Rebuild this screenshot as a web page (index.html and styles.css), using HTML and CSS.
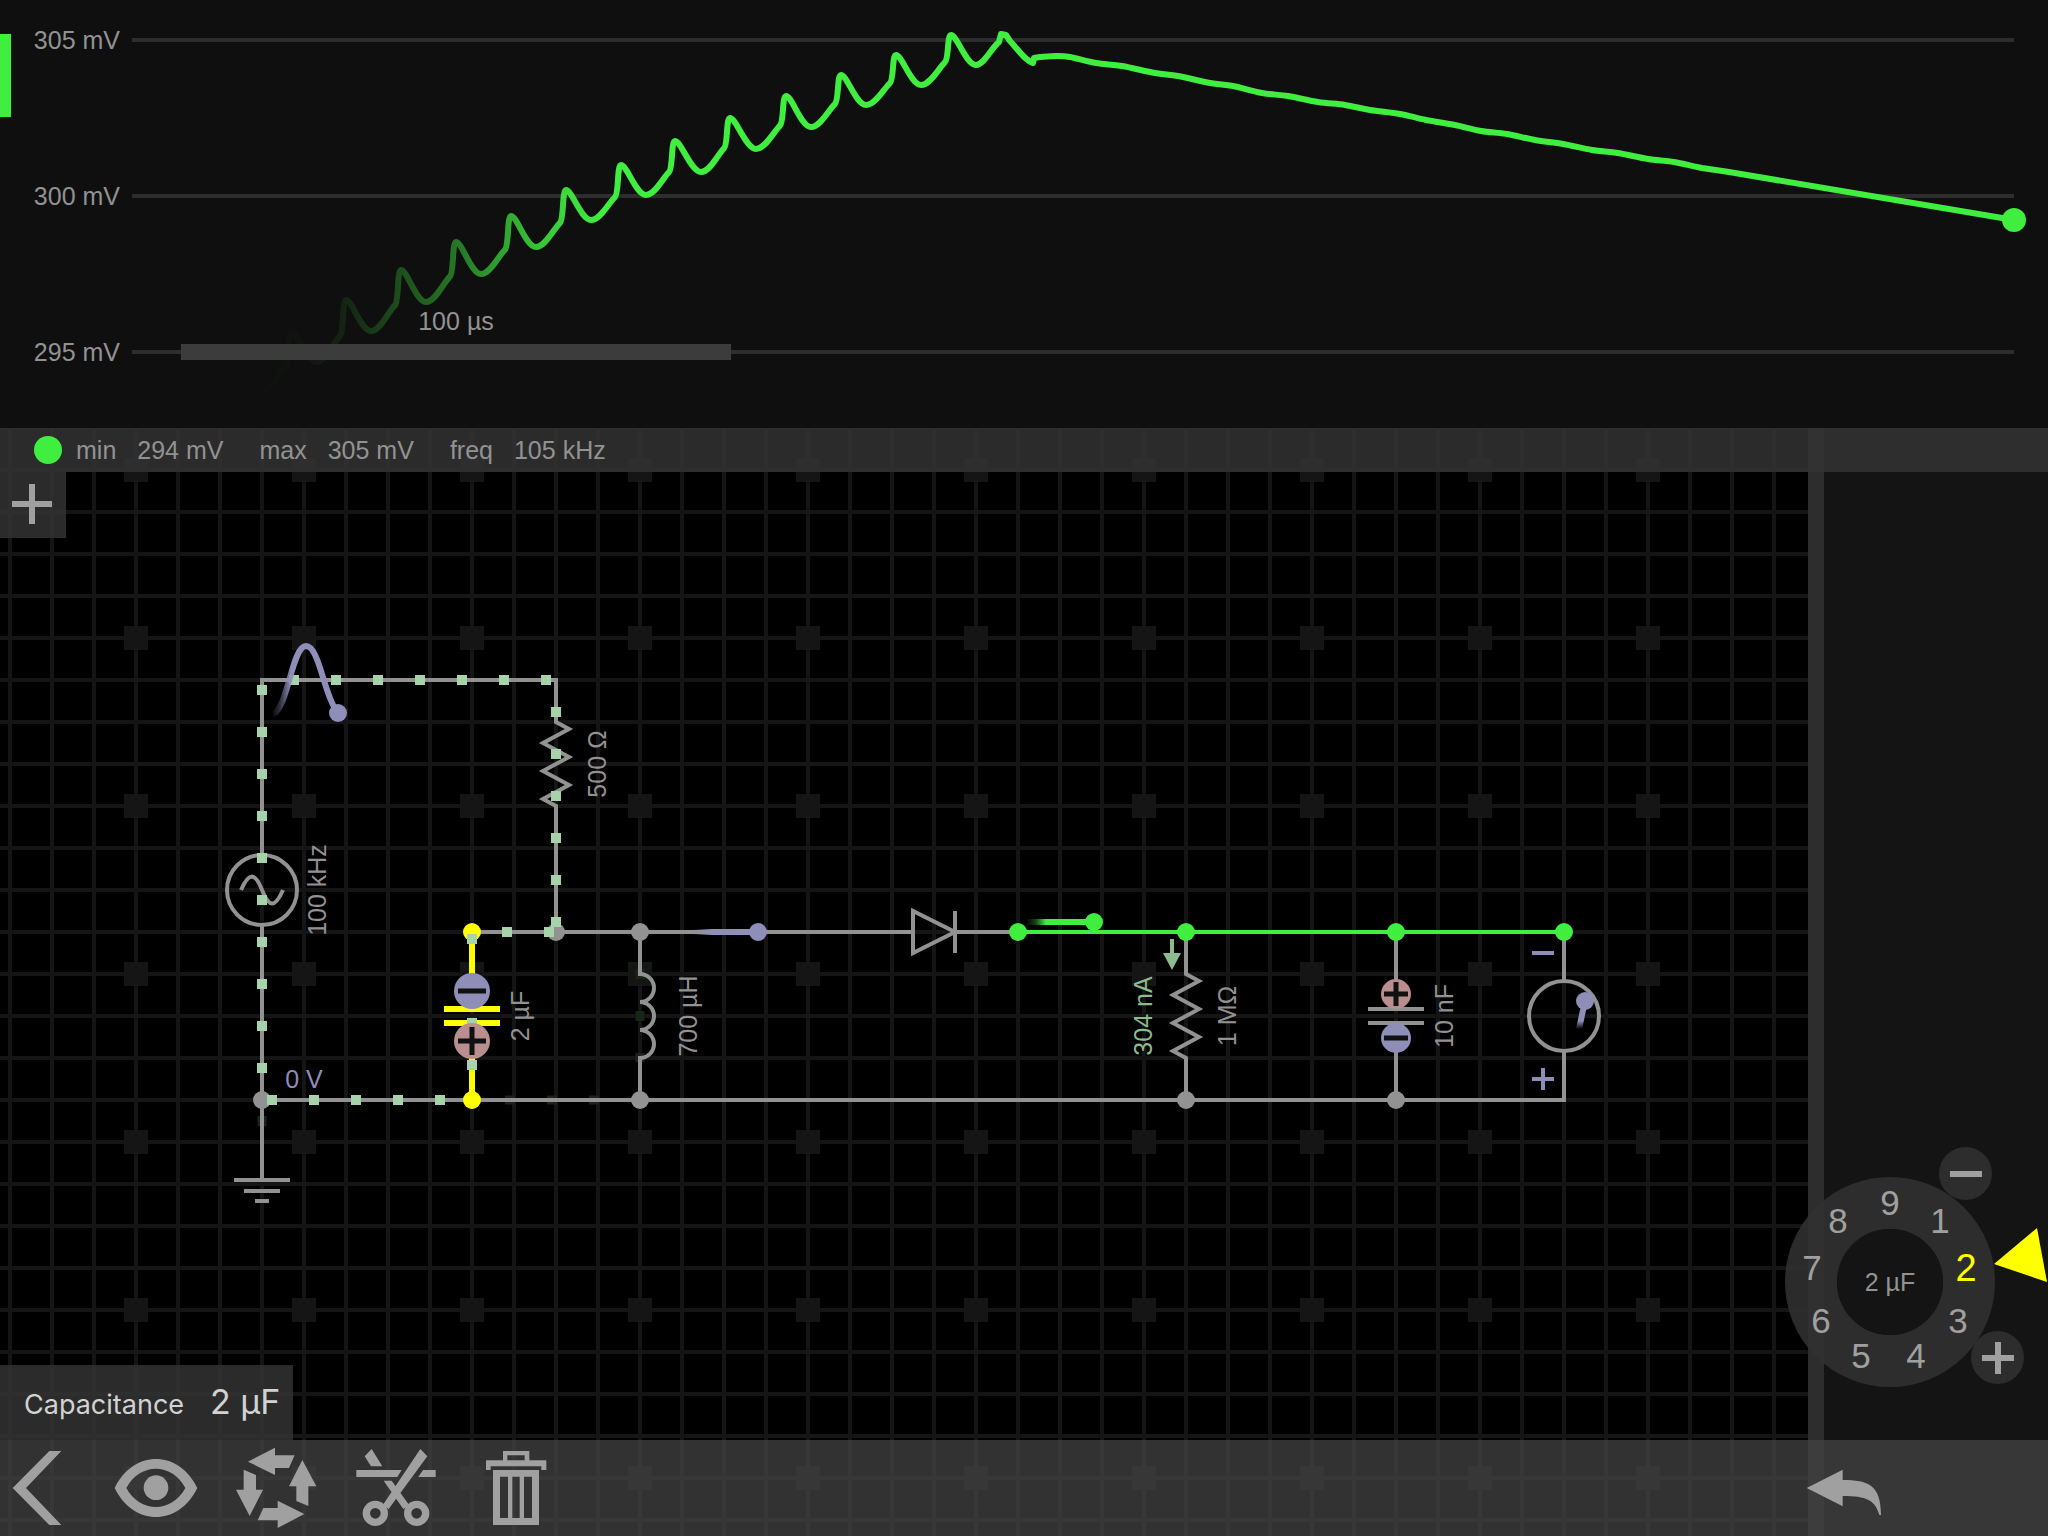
FILE: index.html
```html
<!DOCTYPE html>
<html lang="en">
<head>
<meta charset="utf-8">
<meta name="viewport" content="width=device-width, initial-scale=1">
<title>Circuit simulator</title>
<link rel="stylesheet" href="styles.css">
</head>
<body>
<header class="scope">
  <svg class="scope-plot" viewBox="0 0 2048 428" role="img" aria-label="Voltage over time">
    <defs>
      <linearGradient id="trace-fade" gradientUnits="userSpaceOnUse" x1="255" y1="0" x2="605" y2="0">
        <stop offset="0" stop-color="#40ee40" stop-opacity="0"/>
        <stop offset=".14" stop-color="#40ee40" stop-opacity=".02"/>
        <stop offset=".26" stop-color="#40ee40" stop-opacity=".1"/>
        <stop offset=".42" stop-color="#40ee40" stop-opacity=".29"/>
        <stop offset=".57" stop-color="#40ee40" stop-opacity=".46"/>
        <stop offset=".73" stop-color="#40ee40" stop-opacity=".7"/>
        <stop offset=".9" stop-color="#40ee40" stop-opacity=".92"/>
        <stop offset="1" stop-color="#40ee40"/>
      </linearGradient>
    </defs>
    <path class="scope-line" d="M132 40H2014M132 196H2014M132 352H2014"/>
    <rect class="live" x="0" y="34" width="11" height="83"/>
    <path id="trace" class="trace" stroke="url(#trace-fade)"/>
    <circle class="live" cx="2014" cy="220" r="12"/>
    <rect class="time-bar" x="181" y="344" width="550" height="16"/>
    <g class="label">
      <text x="120" y="49" text-anchor="end">305 mV</text>
      <text x="120" y="205" text-anchor="end">300 mV</text>
      <text x="120" y="361" text-anchor="end">295 mV</text>
      <text x="456" y="330" text-anchor="middle">100 µs</text>
    </g>
  </svg>
</header>

<main class="workspace">
  <svg class="board" role="img" aria-label="Circuit diagram">
    <defs>
      <pattern id="cells" patternUnits="userSpaceOnUse" x="8" y="6" width="42" height="42">
        <path class="grid-fill" d="M0 0H42V4H4V42H0Z"/>
      </pattern>
      <pattern id="marks" patternUnits="userSpaceOnUse" x="124" y="458" width="168" height="168">
        <rect class="grid-fill" width="24" height="24"/>
      </pattern>
      <linearGradient id="sine-fade" gradientUnits="userSpaceOnUse" x1="270" y1="0" x2="291" y2="0">
        <stop offset="0" stop-color="#8e8eb9" stop-opacity="0"/>
        <stop offset=".5" stop-color="#8e8eb9" stop-opacity=".35"/>
        <stop offset="1" stop-color="#8e8eb9"/>
      </linearGradient>
      <linearGradient id="probe-fade" gradientUnits="userSpaceOnUse" x1="694" y1="0" x2="712" y2="0">
        <stop offset="0" stop-color="#8e8eb9" stop-opacity="0"/>
        <stop offset="1" stop-color="#8e8eb9"/>
      </linearGradient>
      <linearGradient id="live-fade" gradientUnits="userSpaceOnUse" x1="1026" y1="0" x2="1046" y2="0">
        <stop offset="0" stop-color="#40ee40" stop-opacity="0"/>
        <stop offset=".5" stop-color="#40ee40" stop-opacity=".3"/>
        <stop offset="1" stop-color="#40ee40"/>
      </linearGradient>
      <linearGradient id="needle-fade" gradientUnits="userSpaceOnUse" x1="0" y1="1029" x2="0" y2="1021">
        <stop offset="0" stop-color="#8e8eb9" stop-opacity="0"/>
        <stop offset="1" stop-color="#8e8eb9"/>
      </linearGradient>
    </defs>
    <g transform="translate(0 -428)">
      <rect x="0" y="426" width="4000" height="3000" fill="url(#cells)"/>
      <rect x="0" y="426" width="1700" height="3000" fill="url(#marks)"/>

      <!-- nearly still charges -->
      <path class="charge-dim" d="M505 1100H615M640 969V1062" />
      <path class="charge-dim" d="M262 1116V1126"/>

      <!-- wires -->
      <g class="wire">
        <path d="M262 855V680H556V722L569 729L543 743L569 757L543 771L569 785L543 799L556 806V932"/>
        <path d="M262 925V1180M234 1180H290M244 1191H280M255 1201H269"/>
        <circle cx="262" cy="890" r="35"/>
        <path d="M241 890C249 872 255 872 262 890S275 908 283 890"/>
        <path d="M472 932H913M955 932H1018M913 911V953L955 932ZM955 911V953"/>
        <path d="M640 932V974A14 14 0 0 1 640 1002A14 14 0 0 1 640 1030A14 14 0 0 1 640 1058V1100"/>
        <path d="M1186 932V974L1199 981L1173 995L1199 1009L1173 1023L1199 1037L1173 1051L1186 1058V1100"/>
        <path d="M1396 932V1009M1368 1009H1424M1368 1023H1424M1396 1023V1100"/>
        <path d="M1564 932V981M1564 1051V1100H262"/>
        <circle cx="1564" cy="1016" r="35"/>
      </g>
      <g class="node">
        <circle cx="262" cy="1100" r="9"/>
        <circle cx="556" cy="932" r="9"/>
        <circle cx="640" cy="932" r="9"/>
        <circle cx="640" cy="1100" r="9"/>
        <circle cx="1186" cy="1100" r="9"/>
        <circle cx="1396" cy="1100" r="9"/>
      </g>

      <!-- output net -->
      <path class="live-wire" d="M1018 932H1564"/>
      <rect x="1026" y="919" width="66" height="6" fill="url(#live-fade)"/>
      <g class="live">
        <circle cx="1094" cy="922" r="9"/>
        <circle cx="1018" cy="932" r="9"/>
        <circle cx="1186" cy="932" r="9"/>
        <circle cx="1396" cy="932" r="9"/>
        <circle cx="1564" cy="932" r="9"/>
      </g>

      <!-- selected capacitor -->
      <path class="selected" d="M472 932V1009M444 1009H500M444 1023H500M472 1023V1100"/>
      <g class="selected-node">
        <circle cx="472" cy="932" r="9"/>
        <circle cx="472" cy="1100" r="9"/>
      </g>

      <!-- moving charges -->
      <g class="charge">
        <path d="M262 685V1080"/>
        <path d="M289 680H551"/>
        <path d="M556 707V930"/>
        <path d="M502 932H554"/>
        <path d="M267 1100H450"/>
        <path d="M472 934V945M472 1018V1028M472 1060V1070"/>
      </g>

      <!-- plate charge badges -->
      <circle class="negative" cx="472" cy="991" r="18"/>
      <circle class="positive" cx="472" cy="1041" r="18"/>
      <path class="sign" d="M458 991H486M458 1041H486M472 1027V1055"/>
      <circle class="positive" cx="1396" cy="994" r="15"/>
      <circle class="negative" cx="1396" cy="1038" r="15"/>
      <path class="sign" d="M1384 994H1408M1396 982V1006M1384 1038H1408"/>

      <!-- probes -->
      <path class="probe-line" stroke="url(#sine-fade)" d="M273 714C288 708 292 646 306 646C319 646 324 694 336 710"/>
      <rect x="694" y="929" width="62" height="6" fill="url(#probe-fade)"/>
      <path class="probe-line" stroke="url(#needle-fade)" d="M1579 1029L1585 1001"/>
      <g class="negative">
        <circle cx="338" cy="713" r="9"/>
        <circle cx="758" cy="932" r="9"/>
        <circle cx="1585" cy="1001" r="9"/>
        <path d="M1532 951H1554V955H1532Z"/>
        <path d="M1532 1077H1554V1081H1532ZM1541 1068H1545V1090H1541Z"/>
      </g>
      <path class="current" d="M1170 939H1174V953H1181L1172 970L1163 953H1170Z"/>

      <g class="label" text-anchor="middle">
        <text transform="translate(606 764) rotate(-90)">500 Ω</text>
        <text transform="translate(326 890) rotate(-90)">100 kHz</text>
        <text transform="translate(529 1016) rotate(-90)">2 µF</text>
        <text transform="translate(697 1016) rotate(-90)">700 µH</text>
        <text transform="translate(1236 1016) rotate(-90)">1 MΩ</text>
        <text transform="translate(1453 1016) rotate(-90)">10 nF</text>
        <text class="current" transform="translate(1152 1016) rotate(-90)">304 nA</text>
        <text class="negative" x="304" y="1088">0 V</text>
      </g>
    </g>
  </svg>

  <aside class="sidebar"></aside>

  <div class="stats">
    <span class="stats-dot"></span>
    <dl class="stats-list">
      <div class="stat"><dt>min</dt><dd>294 mV</dd></div>
      <div class="stat"><dt>max</dt><dd>305 mV</dd></div>
      <div class="stat"><dt>freq</dt><dd>105 kHz</dd></div>
    </dl>
  </div>

  <button class="add" type="button" aria-label="Add component">
    <svg viewBox="0 0 40 40" width="40" height="40"><path d="M0 17H17V0H23V17H40V23H23V40H17V23H0Z"/></svg>
  </button>

  <div class="value-panel"><span>Capacitance</span><output class="value">2 µF</output></div>

  <div class="dial">
    <svg class="dial-face" viewBox="0 0 264 242" width="264" height="242" role="img" aria-label="Value dial">
      <circle class="dial-ring" cx="106" cy="136" r="79"/>
      <circle class="dial-hub" cx="106" cy="136" r="53"/>
      <path class="dial-pointer" d="M210 118L253 82L263 136Z"/>
      <g class="dial-digits" text-anchor="middle">
        <text x="156" y="87">1</text>
        <text class="dial-active" x="182" y="135">2</text>
        <text x="174" y="187">3</text>
        <text x="132" y="222">4</text>
        <text x="77" y="222">5</text>
        <text x="37" y="187">6</text>
        <text x="28" y="134">7</text>
        <text x="54" y="87">8</text>
        <text x="106" y="69">9</text>
      </g>
      <text class="label" x="106" y="145" text-anchor="middle">2 µF</text>
    </svg>
    <button class="step step-down" type="button" aria-label="Decrease">
      <svg viewBox="0 0 32 32" width="32" height="32"><path d="M0 13H32V19H0Z"/></svg>
    </button>
    <button class="step step-up" type="button" aria-label="Increase">
      <svg viewBox="0 0 32 32" width="32" height="32"><path d="M0 13H13V0H19V13H32V19H19V32H13V19H0Z"/></svg>
    </button>
  </div>

  <nav class="toolbar" aria-label="Tools">
    <button class="tool" type="button" aria-label="Back">
      <svg viewBox="0 270 252 288" width="84" height="96"><path d="M38 414L148 303H184L78 414L184 525H148Z"/></svg>
    </button>
    <button class="tool" type="button" aria-label="View">
      <svg viewBox="324 270 288 288" width="96" height="96">
        <path fill-rule="evenodd" d="M344 414C400 298 536 298 592 414C536 530 400 530 344 414ZM379 414C420 337 515 337 556 414C515 490 420 490 379 414Z"/>
        <circle cx="468" cy="413" r="37"/>
      </svg>
    </button>
    <button class="tool" type="button" aria-label="Rotate">
      <svg viewBox="6 0 288 288" width="96" height="96">
        <path d="M66 65L147 23V46H206L189 84H147V105ZM229 60L271 139H247V198L211 183V139H189ZM235 222L155 264V241H95L112 204H155V182ZM71 228L30 149H53V89L90 105V149H111Z"/>
      </svg>
    </button>
    <button class="tool" type="button" aria-label="Cut wire">
      <svg viewBox="366 0 288 288" width="96" height="96">
        <path d="M437 27L416 49L435 79H469ZM391 90H527L514 111H391ZM591 90H629V111H577ZM583 27L604 49L488 207L470 196ZM473 122H497L550 196L532 207Z"/>
        <circle class="tool-ring" cx="448" cy="220" r="27"/>
        <circle class="tool-ring" cx="572" cy="220" r="27"/>
      </svg>
    </button>
    <button class="tool" type="button" aria-label="Delete">
      <svg viewBox="504 270 288 288" width="96" height="96">
        <path fill-rule="evenodd" d="M609 331V303H688V331H739V360H724V349H572V360H558V331ZM622 331H674V316H622ZM579 360H717V525H579ZM600 380V504H624V380ZM637 380V504H659V380ZM672 380V504H696V380Z"/>
      </svg>
    </button>
    <button class="tool tool-undo" type="button" aria-label="Undo">
      <svg viewBox="108 960 288 288" width="96" height="96">
        <path d="M140 1104L248 1049V1080C325 1080 363 1095 363 1185H358C346 1140 320 1128 248 1128V1159Z"/>
      </svg>
    </button>
  </nav>
</main>
<script src="trace.js"></script>
</body>
</html>
```
FILE: trace.js
```js
// Ripple samples, one per drive cycle: the crest and the dip that follows it.
const crests = [[291, 331], [346, 300], [401, 270], [456, 242], [511, 216], [566, 190], [621, 165],
  [675, 141], [730, 118], [786, 96], [841, 75], [896, 55], [951, 35]];
const dips = [[316, 362], [371, 331], [426, 302], [481, 274], [536, 247], [591, 220], [646, 195],
  [701, 172], [756, 149], [811, 127], [866, 105], [921, 85], [976, 65]];
const decay = [[1040, 57], [1056, 56], [1070, 57], [1096, 63], [1122, 66], [1155, 73],
  [1178, 76], [1210, 83], [1233, 86], [1262, 93], [1288, 96], [1318, 102], [1345, 105], [1370, 110],
  [1400, 114], [1426, 120], [1455, 125], [1481, 131], [1507, 134], [1535, 140], [1563, 144],
  [1592, 150], [1618, 153], [1648, 159], [1674, 162], [1702, 168], [1729, 172], [2014, 220]];

let d = 'M262 392C272 388 281 372 286 366C289 362 288 331 291 331';
crests.forEach(([cx, cy], i) => {
  const [dx, dy] = dips[i];
  d += `C${cx + 6} ${cy} ${dx - 10} ${dy} ${dx} ${dy}`;
  const next = crests[i + 1];
  if (next) {
    const [nx, ny] = next;
    const ky = ny + 36 - i * 0.8;
    d += `C${dx + 9} ${dy} ${nx - 13} ${ky + 7} ${nx - 6} ${ky}C${nx - 2} ${ky - 4} ${nx - 4} ${ny} ${nx} ${ny}`;
  }
});
d += 'C984 65 992 47 999 42L1001 34L1006 35L1010 41C1020 52 1026 61 1033 63L1034 58L1040 57';

// Smooth curve through the decay samples.
for (let i = 0; i < decay.length - 1; i++) {
  const p0 = decay[Math.max(i - 1, 0)];
  const [p1, p2] = [decay[i], decay[i + 1]];
  const p3 = decay[Math.min(i + 2, decay.length - 1)];
  const long = p3[0] - p2[0] > 100 || p2[0] - p1[0] > 100;
  d += long
    ? `L${p2[0]} ${p2[1]}`
    : `C${p1[0] + (p2[0] - p0[0]) / 6} ${p1[1] + (p2[1] - p0[1]) / 6} ${p2[0] - (p3[0] - p1[0]) / 6} ${p2[1] - (p3[1] - p1[1]) / 6} ${p2[0]} ${p2[1]}`;
}
document.getElementById('trace').setAttribute('d', d);
```
FILE: styles.css
```css
* {
  box-sizing: border-box;
}

body {
  margin: 0;
  min-height: 100vh;
  display: flex;
  flex-direction: column;
  background: #000;
  color: #929292;
  font: 25px/32px "Liberation Sans", Arial, sans-serif;
}

button {
  margin: 0;
  padding: 0;
  border: 0;
  display: grid;
  place-items: center;
  background: none;
  color: inherit;
  cursor: pointer;
}

svg {
  display: block;
}

/* Oscilloscope */
.scope {
  background: #0f0f0f;
}

.scope-plot {
  width: 100%;
  height: auto;
}

.scope-line {
  stroke: #2d2d2d;
  stroke-width: 4;
}

.trace {
  fill: none;
  stroke-width: 6;
  stroke-linejoin: round;
}

.live {
  fill: #40ee40;
}

.time-bar {
  fill: #3c3c3c;
}

.label {
  fill: #929292;
  font-size: 25px;
}

/* Workspace: bars overlap the board */
.workspace {
  flex: 1;
  display: grid;
  grid-template-columns: minmax(0, 1fr) 240px;
  grid-template-rows: 44px minmax(720px, 1fr) 96px;
  overflow: hidden;
}

.board {
  grid-area: 1 / 1 / 4 / 2;
  width: 100%;
  height: 100%;
  min-height: 0;
}

.grid-fill {
  fill: #151515;
}

.wire {
  fill: none;
  stroke: #929292;
  stroke-width: 4;
  stroke-miterlimit: 10;
}

.node {
  fill: #929292;
}

.live-wire {
  stroke: #40ee40;
  stroke-width: 4;
}

.selected {
  fill: none;
  stroke: #ff0;
  stroke-width: 6;
}

.selected-node {
  fill: #ff0;
}

.charge {
  fill: none;
  stroke: #a7d3ab;
  stroke-width: 10;
  stroke-dasharray: 10 32;
}

.charge-dim {
  fill: none;
  stroke: #1a241b;
  stroke-width: 9;
  stroke-dasharray: 10 32;
}

.negative {
  fill: #8e8eb9;
}

.positive {
  fill: #b98e8e;
}

.sign {
  stroke: #111;
  stroke-width: 5;
}

.probe-line {
  fill: none;
  stroke-width: 6;
}

.current {
  fill: #8bbb8f;
}

.sidebar {
  grid-area: 1 / 2 / 4 / 3;
  border-left: 16px solid #2d2d2d;
  background: #141414;
}

.stats {
  grid-area: 1 / 1 / 2 / 3;
  display: flex;
  align-items: center;
  gap: 14px;
  padding-left: 34px;
  background: rgba(52, 52, 52, .83);
}

.stats-dot {
  width: 28px;
  height: 28px;
  border-radius: 50%;
  background: #40ee40;
}

.stats-list {
  margin: 0;
  display: flex;
  gap: 36px;
}

.stat {
  display: flex;
  gap: 21px;
}

.stat dd {
  margin: 0;
}

.add {
  grid-area: 2 / 1 / 3 / 2;
  align-self: start;
  justify-self: start;
  width: 66px;
  height: 66px;
  padding: 0 2px 2px 0;
  background: rgba(52, 52, 52, .83);
  fill: #a0a0a0;
}

.value-panel {
  grid-area: 2 / 1 / 3 / 2;
  align-self: end;
  justify-self: start;
  display: flex;
  align-items: baseline;
  gap: 26px;
  padding: 16px 13px 14px 24px;
  background: rgba(52, 52, 52, .83);
  color: #d2d2d2;
  font: 27px/42px Inter, sans-serif;
}

.value {
  font-size: 34px;
}

/* Value dial */
.dial {
  grid-area: 2 / 1 / 3 / 3;
  align-self: end;
  justify-self: end;
  position: relative;
  margin-bottom: 52px;
}

.dial-ring {
  fill: none;
  stroke: rgba(49, 49, 49, .88);
  stroke-width: 52;
}

.dial-hub {
  fill: #141414;
}

.dial-pointer,
.dial-active {
  fill: #ff0;
}

.dial-digits {
  fill: #a0a0a0;
  font-size: 35px;
}

.dial-digits .dial-active {
  fill: #ff0;
  font-size: 38px;
}

.step {
  position: absolute;
  width: 53px;
  height: 53px;
  border-radius: 50%;
  background: #2d2d2d;
  fill: #a0a0a0;
}

.step-down {
  top: 1px;
  right: 56px;
}

.step-up {
  top: 185px;
  right: 24px;
}

/* Toolbar */
.toolbar {
  grid-area: 3 / 1 / 4 / 3;
  display: flex;
  gap: 24px;
  padding-right: 156px;
  background: rgba(67, 67, 67, .75);
  fill: #a0a0a0;
}

.tool-ring {
  fill: none;
  stroke: #a0a0a0;
  stroke-width: 22;
}

.tool-undo {
  margin-left: auto;
}
```
